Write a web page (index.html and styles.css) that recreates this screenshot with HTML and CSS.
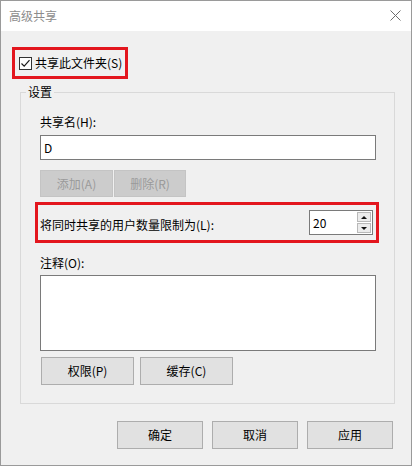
FILE: index.html
```html
<!DOCTYPE html>
<html lang="zh-CN">
<head>
<meta charset="utf-8">
<title>高级共享</title>
<link rel="stylesheet" href="styles.css">
</head>
<body>
<div class="window">
  <div class="titlebar">
    <span class="title">高级共享</span>
    <svg class="close" width="11" height="11" viewBox="0 0 11 11"><path d="M0.5 0.5L10.5 10.5M10.5 0.5L0.5 10.5" stroke="#6e6e6e" stroke-width="1" fill="none"/></svg>
  </div>
  <div class="content">
    <div class="highlight share-toggle">
      <span class="checkbox"><svg width="11" height="11" viewBox="0 0 11 11"><path d="M1.5 5.5L4.2 8.2L9.5 2.2" stroke="#1a1a1a" stroke-width="1.2" fill="none"/></svg></span>
      <span class="check-text">共享此文件夹(S)</span>
    </div>
    <fieldset class="group">
      <legend>设置</legend>
      <div class="field-label first">共享名(H):</div>
      <div class="textbox">D</div>
      <div class="btn-row top-btns">
        <button class="btn disabled add">添加(A)</button>
        <button class="btn disabled del">删除(R)</button>
      </div>
      <div class="highlight limit-row">
        <span class="limit-label">将同时共享的用户数量限制为(L):</span>
        <div class="spinner">
          <span class="spin-value">20</span>
          <div class="spin-btns">
            <span class="spin up"></span>
            <span class="spin down"></span>
          </div>
        </div>
      </div>
      <div class="field-label comment">注释(O):</div>
      <div class="textarea"></div>
      <div class="btn-row bottom-btns">
        <button class="btn wide">权限(P)</button>
        <button class="btn wide">缓存(C)</button>
      </div>
    </fieldset>
    <div class="footer">
      <button class="btn dlg">确定</button>
      <button class="btn dlg">取消</button>
      <button class="btn dlg">应用</button>
    </div>
  </div>
</div>
</body>
</html>
```
FILE: styles.css
```css
* { box-sizing: border-box; }
html, body { margin: 0; padding: 0; background: #f0f0f0; }
body {
  font-family: "Noto Sans CJK SC", "Noto Sans", sans-serif;
  font-size: 12px;
  line-height: 16px;
  color: #000;
}
.window {
  width: 412px;
  height: 466px;
  border: 1px solid #9a9a9a;
  background: #f0f0f0;
  display: flex;
  flex-direction: column;
}
.titlebar {
  height: 30px;
  background: #fff;
  display: flex;
  align-items: center;
  justify-content: space-between;
  padding: 0 10px 1px 8px;
}
.title { color: #8c8c8c; font-size: 12px; }
.close { display: block; }
.content {
  flex: 1;
  padding: 16px 0 0 11px;
}
.highlight { border: 3px solid #e3161e; }
.share-toggle {
  width: 116px;
  height: 32px;
  display: flex;
  align-items: center;
  padding-left: 4px;
}
.checkbox {
  width: 13px;
  height: 13px;
  border: 1px solid #333;
  background: #fff;
  display: flex;
  align-items: center;
  justify-content: center;
}
.checkbox svg { display: block; }
.check-text { margin-left: 3px; white-space: nowrap; }
.group {
  margin: 5px 0 0 8px;
  width: 375px;
  border: 1px solid #d9d9d9;
  padding: 0 18px 18px 19px;
}
.group legend {
  padding: 0 2px;
  margin-left: -14px;
  line-height: 16px;
}
.field-label.first { margin-top: 14px; }
.textbox {
  margin-top: 5px;
  height: 25px;
  border: 1px solid #7a7a7a;
  background: #fff;
  padding-left: 3px;
  display: flex;
  align-items: center;
}
.btn-row { display: flex; }
.btn {
  font-family: inherit;
  font-size: 12px;
  line-height: 16px;
  color: #000;
  background: #e1e1e1;
  border: 1px solid #adadad;
  padding: 0;
  margin: 0;
}
.btn.disabled {
  background: #cccccc;
  border-color: #c4c4c4;
  color: #9a9a9a;
}
.top-btns { margin-top: 10px; gap: 1px; }
.top-btns .btn { height: 27px; }
.btn.add { width: 73px; }
.btn.del { width: 72px; }
.limit-row {
  margin: 5px -3px 0 -5px;
  height: 41px;
  display: flex;
  justify-content: space-between;
  align-items: flex-start;
  padding: 5px 3px 5px 2px;
}
.limit-label { margin-top: 7px; white-space: nowrap; }
.spinner {
  width: 64px;
  height: 25px;
  border: 1px solid #7a7a7a;
  background: #fff;
  display: flex;
}
.spin-value { flex: 1; padding-left: 3px; line-height: 23px; }
.spin-btns {
  width: 15px;
  display: flex;
  flex-direction: column;
  gap: 1px;
  padding: 1px 1px 1px 0;
}
.spin {
  flex: 1;
  background: #ececec;
  border: 1px solid #b9b9b9;
  display: flex;
  align-items: center;
  justify-content: center;
}
.spin::after {
  content: "";
  width: 0;
  height: 0;
  border-left: 3px solid transparent;
  border-right: 3px solid transparent;
}
.spin.up::after { border-bottom: 3px solid #111; }
.spin.down::after { border-top: 3px solid #111; }
.field-label.comment { margin-top: 12px; }
.textarea {
  margin-top: 4px;
  height: 76px;
  border: 1px solid #7a7a7a;
  background: #fff;
}
.bottom-btns { margin-top: 6px; padding-left: 1px; gap: 6px; }
.btn.wide { width: 93px; height: 28px; }
.footer {
  margin-top: 17px;
  display: flex;
  justify-content: flex-end;
  gap: 9px;
  padding-right: 18px;
}
.btn.dlg { width: 86px; height: 28px; }
```
